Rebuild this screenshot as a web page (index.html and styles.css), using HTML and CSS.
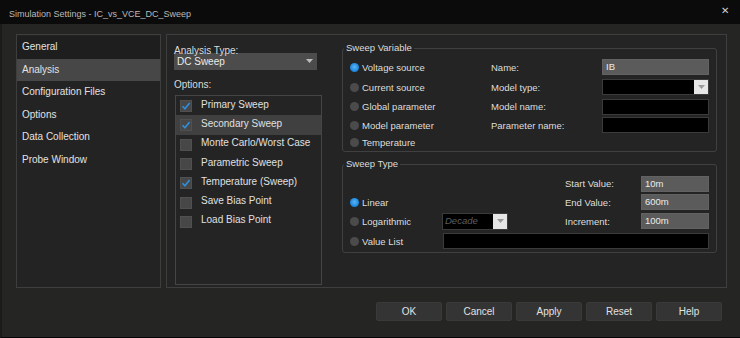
FILE: index.html
```html
<!DOCTYPE html>
<html lang="en">
<head>
    <meta charset="UTF-8">
    <link rel="stylesheet" href="styles.css">
    <title>Simulation Settings</title>
</head>
<body>
    <div class="window">
        <div class="titlebar">
            <span class="title">Simulation Settings - IC_vs_VCE_DC_Sweep</span>
            <span class="close">✕</span>
        </div>
        <div class="content">
            <div class="panels">
                <ul class="nav">
                    <li>General</li>
                    <li class="active">Analysis</li>
                    <li>Configuration Files</li>
                    <li>Options</li>
                    <li>Data Collection</li>
                    <li>Probe Window</li>
                </ul>
                <div class="main">
                    <div class="analysis">
                        <div class="label">Analysis Type:</div>
                        <div class="select">
                            <span>DC Sweep</span>
                            <svg width="7" height="4" viewBox="0 0 7 4"><path d="M0 0h7L3.5 4z" fill="#bdbdbd"/></svg>
                        </div>
                        <div class="label opt_label">Options:</div>
                        <ul class="options">
                            <li><span class="check on"><svg width="10" height="10" viewBox="0 0 10 10"><path d="M1.5 5.2l2.4 2.5L8.6 2" stroke="#2d8fe0" stroke-width="1.6" fill="none"/></svg></span>Primary Sweep</li>
                            <li class="sel"><span class="check on"><svg width="10" height="10" viewBox="0 0 10 10"><path d="M1.5 5.2l2.4 2.5L8.6 2" stroke="#2d8fe0" stroke-width="1.6" fill="none"/></svg></span>Secondary Sweep</li>
                            <li><span class="check"></span>Monte Carlo/Worst Case</li>
                            <li><span class="check"></span>Parametric Sweep</li>
                            <li><span class="check on"><svg width="10" height="10" viewBox="0 0 10 10"><path d="M1.5 5.2l2.4 2.5L8.6 2" stroke="#2d8fe0" stroke-width="1.6" fill="none"/></svg></span>Temperature (Sweep)</li>
                            <li><span class="check"></span>Save Bias Point</li>
                            <li><span class="check"></span>Load Bias Point</li>
                        </ul>
                    </div>
                    <div class="sweep">
                        <fieldset class="group">
                            <legend>Sweep Variable</legend>
                            <div class="var_grid">
                                <div class="radio on">Voltage source</div>
                                <div class="lbl">Name:</div>
                                <div class="field grey">IB</div>

                                <div class="radio">Current source</div>
                                <div class="lbl">Model type:</div>
                                <div class="field black combo"><span></span><span class="drop"><svg width="7" height="4" viewBox="0 0 7 4"><path d="M0 0h7L3.5 4z" fill="#9a9a9a"/></svg></span></div>

                                <div class="radio">Global parameter</div>
                                <div class="lbl">Model name:</div>
                                <div class="field black"></div>

                                <div class="radio">Model parameter</div>
                                <div class="lbl">Parameter name:</div>
                                <div class="field black"></div>

                                <div class="radio">Temperature</div>
                            </div>
                        </fieldset>
                        <fieldset class="group type">
                            <legend>Sweep Type</legend>
                            <div class="type_grid">
                                <div class="lbl start_lbl">Start Value:</div>
                                <div class="field grey start_in">10m</div>

                                <div class="radio on">Linear</div>
                                <div class="lbl end_lbl">End Value:</div>
                                <div class="field grey end_in">600m</div>

                                <div class="radio">Logarithmic</div>
                                <div class="field black combo decade"><span>Decade</span><span class="drop"><svg width="7" height="4" viewBox="0 0 7 4"><path d="M0 0h7L3.5 4z" fill="#9a9a9a"/></svg></span></div>
                                <div class="lbl">Increment:</div>
                                <div class="field grey">100m</div>

                                <div class="radio">Value List</div>
                                <div class="field black list_in"></div>
                            </div>
                        </fieldset>
                    </div>
                </div>
            </div>
            <div class="buttons">
                <button>OK</button>
                <button>Cancel</button>
                <button>Apply</button>
                <button>Reset</button>
                <button>Help</button>
            </div>
        </div>
    </div>
</body>
</html>
```

FILE: styles.css
```css
*{
    margin: 0;
    padding: 0;
    box-sizing: border-box;
}
body{
    background-color: #000;
    font-family: "Liberation Sans", Arial, sans-serif;
    color: #dcdcdc;
}
.window{
    width: 740px;
    height: 338px;
    display: flex;
    flex-direction: column;
}
.titlebar{
    height: 24px;
    background-color: #0b0b0b;
    display: flex;
    justify-content: space-between;
    align-items: center;
    padding: 3px 11px 0 9px;
}
.title{
    font-size: 9px;
    color: #b9b9b9;
}
.close{
    font-size: 10px;
    color: #cfcfcf;
    margin-top: -6px;
}
.content{
    flex: 1;
    background-color: #252624;
    border-left: 2px solid #1a1b1a;
    border-bottom: 1px solid #050505;
    padding: 10px 13px 0 14px;
}
.panels{
    display: flex;
    gap: 5px;
    height: 254px;
}
.nav{
    list-style: none;
    width: 146px;
    border: 1px solid #3d3e3d;
    background-color: #222322;
    padding-top: 1px;
}
.nav li{
    height: 22.6px;
    line-height: 22.6px;
    padding-left: 5px;
    font-size: 10px;
    color: #e2e2e2;
}
.nav li:first-child{
    background-color: #1d1e1d;
}
.nav li.active{
    background-color: #464746;
}
.main{
    flex: 1;
    border: 1px solid #3d3e3d;
    background-color: #232423;
    display: flex;
    align-items: flex-start;
    padding: 9px 9px 0 7px;
    gap: 20px;
}
.analysis{
    width: 148px;
}
.label{
    font-size: 10px;
    color: #dcdcdc;
    height: 9px;
    line-height: 14px;
}
.select{
    width: 143px;
    height: 17px;
    background-color: #4b4c4b;
    display: flex;
    justify-content: space-between;
    align-items: center;
    padding: 0 4px 0 3px;
    font-size: 10px;
    color: #ececec;
}
.select svg{
    margin-top: -1px;
}
.opt_label{
    margin-top: 8px;
    height: 17px;
}
.options{
    list-style: none;
    margin-left: 1px;
    width: 147px;
    height: 190px;
    border: 1px solid #444544;
    background-color: #232423;
}
.options li{
    height: 19.3px;
    display: flex;
    align-items: center;
    gap: 9px;
    padding-left: 4px;
    font-size: 10px;
    color: #e0e0e0;
    padding-bottom: 3px;
}
.options li.sel{
    background-color: #3f403f;
}
.check{
    width: 12px;
    height: 12px;
    background-color: #464746;
    border: 1px solid #4f504f;
    display: flex;
    align-items: center;
    justify-content: center;
    margin-top: 4px;
}
.sweep{
    width: 375px;
    margin-top: -2px;
}
.group{
    border: 1px solid #3f403f;
    border-radius: 3px;
    padding: 3px 7px 0;
    min-width: 0;
}
.group legend{
    font-size: 9.5px;
    line-height: 12px;
    color: #dcdcdc;
    padding: 0 2px;
    margin-left: -6px;
}
.group.type{
    margin-top: 6px;
    padding-top: 4px;
    padding-bottom: 1px;
}
.var_grid{
    display: grid;
    grid-template-columns: 141px 111px 107px;
    grid-template-rows: 20px 20px 19px 18px 17px;
    align-items: center;
    font-size: 9.5px;
}
.type_grid{
    display: grid;
    grid-template-columns: 92px 123px 76px 68px;
    grid-template-rows: 19px 18px 20px 20px;
    align-items: center;
    font-size: 9.5px;
}
.start_lbl{
    grid-column: 3;
}
.end_lbl{
    grid-column: 3;
}
.list_in{
    grid-column: 2 / 5;
    margin-left: 1px;
}
.radio{
    display: flex;
    align-items: center;
    gap: 3px;
    color: #dedede;
}
.radio::before{
    content: "";
    width: 9px;
    height: 9px;
    border-radius: 50%;
    background-color: #4a4b4a;
}
.radio.on::before{
    background: radial-gradient(circle at 50% 45%, #5bb4f5 0, #1f8ae0 60%, #1a6fb8 100%);
}
.lbl{
    color: #dedede;
}
.field{
    height: 16px;
    font-size: 9.5px;
    line-height: 16px;
    padding-left: 3px;
}
.field.grey{
    background-color: #5a5b5a;
    border: 1px solid #616261;
    line-height: 14px;
    color: #ececec;
}
.field.black{
    background-color: #000;
    border: 1px solid #3a3b3a;
}
.combo{
    display: flex;
    justify-content: space-between;
    padding-left: 0;
}
.combo span:first-child{
    padding-left: 2px;
    font-style: italic;
    color: #5e5e5e;
    line-height: 14px;
}
.drop{
    width: 14px;
    height: 14px;
    background-color: #e6e6e6;
    display: flex;
    align-items: center;
    justify-content: center;
}
.decade{
    width: 66px;
    height: 17px;
}
.decade .drop{
    height: 15px;
}
.buttons{
    display: flex;
    justify-content: flex-end;
    gap: 4px;
    margin-top: 14px;
    margin-right: 5px;
}
.buttons button{
    width: 66px;
    height: 19px;
    background-color: #333433;
    border: 1px solid #393a39;
    border-radius: 2px;
    color: #e2e2e2;
    font-family: "Liberation Sans", Arial, sans-serif;
    font-size: 10px;
}
```
